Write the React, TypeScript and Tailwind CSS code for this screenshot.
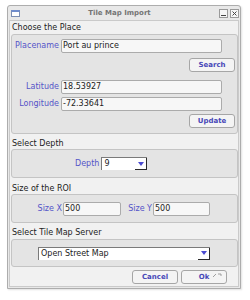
import React from 'react'

const labelCls = 'text-[8px] leading-[10px] text-[#5454c8] whitespace-nowrap'
const fieldCls =
  'h-[14px] bg-[#f7f7f7] border border-[#ababab] rounded-[2px] px-[1px] text-[8px] leading-[12px] text-[#222] whitespace-nowrap overflow-hidden'
const panelCls = 'border border-[#c4c4c4] rounded-[3px] bg-[#e4e4e4]'

const Button: React.FC<{ label: string; children?: React.ReactNode; className?: string }> = ({
  label,
  children,
  className,
}) => (
  <div
    className={`relative w-[46px] h-[14px] flex items-center justify-center bg-[#f4f4f4] border border-[#a6a6a6] rounded-[3px] text-[7px] font-bold text-[#4848b8] ${className ?? ''}`}
  >
    {label}
    {children}
  </div>
)

const Select: React.FC<{ value: string; width: string }> = ({ value, width }) => (
  <div
    className={`${width} h-[13px] flex bg-white border-t border-l border-[#7a7a7a] text-[8px] leading-[12px] text-[#222]`}
  >
    <div className="flex-1 pl-[2px] whitespace-nowrap overflow-hidden">{value}</div>
    <div className="w-[12px] h-[12px] flex items-center justify-center border-r border-b border-[#2a2a2a] bg-white">
      <svg width="6" height="4" viewBox="0 0 6 4">
        <path d="M0 0 L6 0 L3 4 Z" fill="#4a4ad0" />
      </svg>
    </div>
  </div>
)

const SectionLabel: React.FC<{ text: string; className: string }> = ({ text, className }) => (
  <div className={`${className} pl-[1px] text-[8px] leading-[10px] text-[#222]`}>{text}</div>
)

export default function App() {
  return (
    <div className="w-[250px] h-[300px] bg-white pt-[5px] pl-[7px] font-['DejaVu_Sans',sans-serif]">
      <div className="w-[234px] h-[284px] flex flex-col border border-[#adadad] rounded-t-[3px] bg-[#e8e8e8] shadow-[1px_1px_2px_rgba(0,0,0,0.12)]">
        {/* title bar */}
        <div className="h-[14px] flex items-center pl-[3px] pr-[1px]">
          <div className="w-[9px] h-[7px] border border-[#7d8fb4] border-t-[2px] border-t-[#6f8ccc] bg-white" />
          <div className="flex-1 text-center text-[7px] font-bold text-[#747474] leading-[10px]">
            Tile Map Import
          </div>
          <div className="flex gap-[2px]">
            <div className="w-[9px] h-[9px] border border-[#9a9a9a] bg-[#f6f6f6] flex items-end justify-center pb-[1px]">
              <div className="w-[5px] h-[1px] bg-[#444]" />
            </div>
            <div className="w-[9px] h-[9px] border border-[#9a9a9a] bg-[#f6f6f6] flex items-center justify-center">
              <svg width="5" height="5" viewBox="0 0 5 5">
                <path d="M0.5 0.5 L4.5 4.5 M4.5 0.5 L0.5 4.5" stroke="#444" strokeWidth="1" />
              </svg>
            </div>
          </div>
        </div>

        {/* body */}
        <div className="flex-1 mx-[1px] mb-[1px] flex flex-col border border-[#cacaca] bg-[#f1f1f1] pl-[1px]">
          <SectionLabel text="Choose the Place" className="h-[13px] pt-[2px]" />

          <div className={`${panelCls} flex flex-col pt-[4px] pb-[5px] pr-[2px]`}>
            <div className="flex items-center gap-[2px]">
              <span className={`${labelCls} w-[47px] text-right`}>Placename</span>
              <div className={`${fieldCls} w-[161px]`}>Port au prince</div>
            </div>
            <div className="flex justify-end mt-[5px]">
              <Button label="Search" />
            </div>
            <div className="flex items-center gap-[2px] mt-[8px]">
              <span className={`${labelCls} w-[47px] text-right`}>Latitude</span>
              <div className={`${fieldCls} w-[161px]`}>18.53927</div>
            </div>
            <div className="flex items-center gap-[2px] mt-[3px]">
              <span className={`${labelCls} w-[47px] text-right`}>Longitude</span>
              <div className={`${fieldCls} w-[161px]`}>-72.33641</div>
            </div>
            <div className="flex justify-end mt-[3px]">
              <Button label="Update" />
            </div>
          </div>

          <SectionLabel text="Select Depth" className="h-[15px] pt-[5px]" />
          <div className={`${panelCls} h-[29px] flex items-center pl-[63px] gap-[2px]`}>
            <span className={labelCls}>Depth</span>
            <Select value="9" width="w-[46px]" />
          </div>

          <SectionLabel text="Size of the ROI" className="h-[16px] pt-[6px]" />
          <div className={`${panelCls} h-[29px] flex items-center pl-[25px]`}>
            <span className={`${labelCls} w-[25px] text-right`}>Size X</span>
            <div className={`${fieldCls} w-[58px] ml-[1px]`}>500</div>
            <span className={`${labelCls} w-[25px] text-right ml-[6px]`}>Size Y</span>
            <div className={`${fieldCls} w-[57px] ml-[1px]`}>500</div>
          </div>

          <SectionLabel text="Select Tile Map Server" className="h-[16px] pt-[5px]" />
          <div className={`${panelCls} h-[28px] flex items-center pl-[26px]`}>
            <Select value="Open Street Map" width="w-[172px]" />
          </div>

          <div className="flex justify-end gap-[3px] mt-[3px] pr-[11px]">
            <Button label="Cancel" />
            <Button label="Ok">
              <svg className="absolute right-[4px] top-[2px]" width="9" height="4" viewBox="0 0 9 4">
                <path d="M0 4 L3 1 M5 1 L8 1 L8 3" stroke="#8a8a8a" strokeWidth="0.8" fill="none" />
              </svg>
            </Button>
          </div>
        </div>
      </div>
    </div>
  )
}
